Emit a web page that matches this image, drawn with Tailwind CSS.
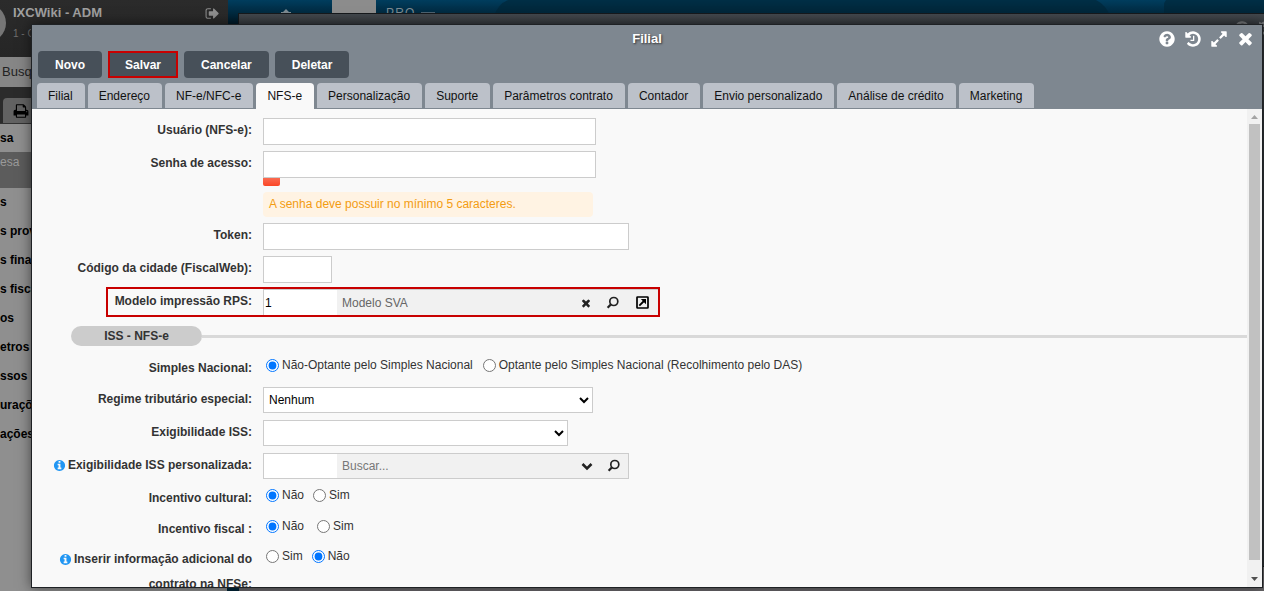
<!DOCTYPE html>
<html lang="pt-BR">
<head>
<meta charset="utf-8">
<title>Filial</title>
<script src="https://cdn.jsdelivr.net/npm/@tailwindcss/browser@4"></script>
</head>
<body class="relative h-screen overflow-hidden bg-[#6a686b] font-['Liberation_Sans',Arial,sans-serif] text-xs text-[#333]">
<svg class="hidden">
  <symbol id="search" viewBox="0 0 14 14"><circle cx="7.800" cy="5.500" r="4" fill="none" stroke="currentColor" stroke-width="1.700"/><path d="M4.800 8.500L1.600 11.800" stroke="currentColor" stroke-width="2.200" fill="none"/></symbol>
  <symbol id="info" viewBox="0 0 1792 1792"><path d="M1152 1376v-160q0-14-9-23t-23-9h-96v-512q0-14-9-23t-23-9h-320q-14 0-23 9t-9 23v160q0 14 9 23t23 9h96v320h-96q-14 0-23 9t-9 23v160q0 14 9 23t23 9h448q14 0 23-9t9-23zm-128-896v-160q0-14-9-23t-23-9h-192q-14 0-23 9t-9 23v160q0 14 9 23t23 9h192q14 0 23-9t9-23zm640 416q0 209-103 385.500t-279.500 279.500-385.500 103-385.500-103-279.500-279.500-103-385.500 103-385.500 279.500-279.500 385.500-103 385.500 103 279.500 279.500 103 385.500z" fill="currentColor"/></symbol>
  <symbol id="times" viewBox="0 0 1792 1792"><path d="M1490 1322q0 40-28 68l-136 136q-28 28-68 28t-68-28l-294-294-294 294q-28 28-68 28t-68-28l-136-136q-28-28-28-68t28-68l294-294-294-294q-28-28-28-68t28-68l136-136q28-28 68-28t68 28l294 294 294-294q28-28 68-28t68 28l136 136q28 28 28 68t-28 68l-294 294 294 294q28 28 28 68z" fill="currentColor"/></symbol>
  <symbol id="question" viewBox="0 0 1792 1792"><path d="M1024 1376v-192q0-14-9-23t-23-9h-192q-14 0-23 9t-9 23v192q0 14 9 23t23 9h192q14 0 23-9t9-23zm256-672q0-88-55.500-163t-138.500-116-170-41q-243 0-371 213-15 24 8 42l132 100q7 6 19 6 16 0 25-12 53-68 86-92 34-24 86-24 48 0 85.500 26t37.500 59q0 38-20 61t-68 45q-63 28-115.500 86.500t-52.500 125.500v36q0 14 9 23t23 9h192q14 0 23-9t9-23q0-19 21.500-49.500t54.500-49.500q32-18 49-28.500t46-35 44.500-48 28-60.500 12.500-81zm384 192q0 209-103 385.500t-279.500 279.500-385.500 103-385.500-103-279.500-279.500-103-385.500 103-385.500 279.500-279.500 385.500-103 385.500 103 279.500 279.500 103 385.500z" fill="currentColor"/></symbol>
  <symbol id="history" viewBox="0 0 1792 1792"><path d="M1664 896q0 156-61 298t-164 245-245 164-298 61q-172 0-327-72.500t-264-204.500q-7-10-6.500-22.500t8.500-20.500l137-138q10-9 25-9 16 2 23 12 73 95 179 147t225 52q104 0 198.500-40.500t163.500-109.500 109.500-163.500 40.500-198.500-40.500-198.500-109.500-163.500-163.500-109.500-198.500-40.500q-98 0-188 35.500t-160 101.500l137 138q31 30 14 69-17 40-59 40h-448q-26 0-45-19t-19-45v-448q0-42 40-59 39-17 69 14l130 129q107-101 244.500-156.500t284.500-55.500q156 0 298 61t245 164 164 245 61 298zm-640-288v448q0 14-9 23t-23 9h-320q-14 0-23-9t-9-23v-64q0-14 9-23t23-9h224v-352q0-14 9-23t23-9h64q14 0 23 9t9 23z" fill="currentColor"/></symbol>
  <symbol id="expand" viewBox="0 0 1792 1792"><path d="M883 1056q0 13-10 23l-332 332 144 144q19 19 19 45t-19 45-45 19h-448q-26 0-45-19t-19-45v-448q0-26 19-45t45-19 45 19l144 144 332-332q10-10 23-10t23 10l114 114q10 10 10 23zm781-864v448q0 26-19 45t-45 19-45-19l-144-144-332 332q-10 10-23 10t-23-10l-114-114q-10-10-10-23t10-23l332-332-144-144q-19-19-19-45t19-45 45-19h448q26 0 45 19t19 45z" fill="currentColor"/></symbol>
</svg>

<!-- Top banner -->
<div class="absolute inset-x-0 top-0 h-6 overflow-hidden bg-linear-to-b from-[#003d5e] to-[#001a28]">
  <svg class="absolute left-[228px] top-0 h-4 w-[1036px]" viewBox="0 0 1036 16">
    <path d="M266 16Q270 4 280 0H868Q878 5 882 16Z" fill="#002536" fill-opacity=".6"/>
    <path d="M936 16V6Q936 2 938 0H1036V16Z" fill="#002536" fill-opacity=".6"/>
    <path d="M53 13V12H55L58 9L61 12H63V13Z" fill="#7d8a91"/>
    <path d="M193 12H207V13H193Z" fill="#4d6270"/>
  </svg>
  <div class="absolute left-[332px] top-0 h-4 w-11 bg-[#8c8c8c]"></div>
  <div class="absolute left-[386px] top-[7px] text-xs leading-3 tracking-widest text-[#7d8a91]">PRO</div>
</div>

<!-- Side menu behind the window -->
<aside class="absolute bottom-0 left-0 top-0 flex w-[228px] flex-col bg-[#6a686b]">
  <div class="relative flex h-[57px] shrink-0 overflow-hidden bg-linear-to-b from-[#2b2b2b] to-[#262626] pl-[13px] pr-2">
    <div class="absolute -left-8 top-1 size-[38px] rounded-full bg-[#767676]"></div>
    <div class="grow">
      <div class="mt-1 text-[13px] font-bold leading-[18px] text-[#a0a0a0]">IXCWiki - ADM</div>
      <div class="mt-[6px] text-[10px] leading-3 text-[#6e6e6e]">1 - Cli</div>
    </div>
    <svg class="mt-[6px] size-[15px] text-[#8f8f8f]" viewBox="0 0 1792 1792"><path fill="currentColor" d="M704 1440q0 4 1 20t.5 26.500-3 23.500-10 19.500-20.500 6.500h-320q-119 0-203.500-84.500t-84.500-203.500v-704q0-119 84.500-203.500t203.500-84.500h320q13 0 22.500 9.500t9.500 22.500q0 4 1 20t.5 26.500-3 23.500-10 19.500-20.500 6.500h-320q-66 0-113 47t-47 113v704q0 66 47 113t113 47h312l11.500 1 11.500 3 8 5.500 7 9 2 13.500zm928-544q0 26-19 45l-544 544q-19 19-45 19t-45-19-19-45v-288h-448q-26 0-45-19t-19-45v-384q0-26 19-45t45-19h448v-288q0-26 19-45t45-19 45 19l544 544q19 19 19 45z"/></svg>
  </div>
  <div class="h-[30px] shrink-0 bg-[#868686] pl-[2px] text-[13px] leading-[30px] text-[#222]">Busque</div>
  <div class="flex h-9 shrink-0 items-end bg-[#2b2b2b] pl-[3px]">
    <div class="flex h-[25px] w-12 items-center rounded-t bg-[#626262] pl-[10px]">
      <svg class="size-4 text-black" viewBox="0 0 1792 1792"><path fill="currentColor" d="M448 1536h896v-256h-896v256zm0-640h896v-384h-160q-40 0-68-28t-28-68v-160h-640v640zm1152 64q0-26-19-45t-45-19-45 19-19 45 19 45 45 19 45-19 19-45zm128 0v416q0 13-9.500 22.500t-22.500 9.500h-224v160q0 40-28 68t-68 28h-960q-40 0-68-28t-28-68v-160h-224q-13 0-22.500-9.500t-9.500-22.500v-416q0-79 56.500-135.500t135.500-56.500h64v-544q0-40 28-68t68-28h672q40 0 88 20t76 48l152 152q28 28 48 76t20 88v256h64q79 0 135.500 56.500t56.500 135.500z"/></svg>
    </div>
  </div>
  <nav class="grow whitespace-nowrap border-t border-[#333] bg-[#8f8f8f] font-bold leading-7 text-black">
    <div>sa</div>
    <div class="h-9 bg-[#5c5c5c] font-normal leading-5 text-[#9a9a9a]">esa</div>
    <div class="flex flex-col gap-px">
      <div>s</div><div>s provedor</div><div>s financeiro</div><div>s fiscais</div><div>os</div><div>etros</div><div>ssos</div><div>urações</div><div>ações</div>
    </div>
  </nav>
</aside>

<!-- Inner window, mostly covered -->
<div class="absolute -right-px bottom-6 left-[238px] top-[13px] border border-[#16191c] bg-linear-to-b from-[#43484d] to-[#2f3337] to-[16px]">
  <div class="flex justify-end gap-2 pr-0 pt-[6px] text-[#74777a]">
    <svg class="size-4"><use href="#question"/></svg>
    <svg class="-mr-[10px] size-4"><use href="#history"/></svg>
  </div>
</div>

<!-- Filial window -->
<main class="absolute bottom-[3px] left-[31px] right-px top-6 flex flex-col overflow-hidden border border-[#1e2124] bg-[#f9f9f9] shadow-[0_0_12px_#0008]">
  <header class="shrink-0 bg-[#7e8790]">
    <div class="relative">
      <h1 class="h-[26px] text-center text-[13px] font-bold leading-7 text-white [text-shadow:1px_1px_2px_#333]">Filial</h1>
      <div class="absolute right-[7px] top-1 flex items-center gap-2 text-white">
        <button aria-label="Ajuda"><svg class="size-[18px]"><use href="#question"/></svg></button>
        <button aria-label="Histórico"><svg class="size-[18px]"><use href="#history"/></svg></button>
        <button aria-label="Expandir"><svg class="size-[18px]"><use href="#expand"/></svg></button>
        <button aria-label="Fechar"><svg class="size-[19px]"><use href="#times"/></svg></button>
      </div>
    </div>
    <div class="flex h-[27px] gap-[6px] px-[6px] font-bold text-white">
      <button class="rounded-sm bg-[#475059] px-[17px]">Novo</button>
      <button class="border-2 border-[#c80000] bg-[#475059] px-[15px]">Salvar</button>
      <button class="rounded-sm bg-[#475059] px-[17px]">Cancelar</button>
      <button class="rounded-sm bg-[#475059] px-[17px]">Deletar</button>
    </div>
    <div class="mt-[5px] flex h-[26px] gap-[3px] pl-[5px] text-[#111] *:h-[25px] *:rounded-t *:bg-[#bcc1c9] *:pl-[11px] *:pr-3" role="tablist">
      <button role="tab">Filial</button>
      <button role="tab">Endereço</button>
      <button role="tab">NF-e/NFC-e</button>
      <button role="tab" aria-selected="true" class="h-[26px]! bg-[#f9f9f9]!">NFS-e</button>
      <button role="tab">Personalização</button>
      <button role="tab">Suporte</button>
      <button role="tab">Parâmetros contrato</button>
      <button role="tab">Contador</button>
      <button role="tab">Envio personalizado</button>
      <button role="tab">Análise de crédito</button>
      <button role="tab">Marketing</button>
    </div>
  </header>

  <div class="flex min-h-0 grow">
    <form class="flex min-w-0 grow flex-col gap-[6px] overflow-hidden pt-[9px]">
      <div class="flex h-[27px] shrink-0 gap-[11px]">
        <label for="usuario" class="w-[220px] text-right font-bold leading-[25px]">Usuário (NFS-e):</label>
        <input id="usuario" class="w-[333px] border border-[#ccc] bg-white px-1">
      </div>
      <div class="flex shrink-0 gap-[11px]">
        <label for="senha" class="w-[220px] text-right font-bold leading-[25px]">Senha de acesso:</label>
        <div>
          <input id="senha" type="password" class="block h-[27px] w-[333px] border border-[#ccc] bg-white px-1">
          <div class="h-2 w-[17px] rounded-b-xs bg-linear-to-b from-[#fa6a50] to-[#fb4524]"></div>
          <p class="mt-[6px] w-[330px] rounded bg-[#fff3e3] pl-[6px] leading-[25px] text-[#f39c12]">A senha deve possuir no mínimo 5 caracteres.</p>
        </div>
      </div>
      <div class="flex h-[27px] shrink-0 gap-[11px]">
        <label for="token" class="w-[220px] text-right font-bold leading-[25px]">Token:</label>
        <input id="token" class="w-[366px] border border-[#ccc] bg-white px-1">
      </div>
      <div class="flex h-[27px] shrink-0 gap-[11px]">
        <label for="cidade" class="w-[220px] text-right font-bold leading-[25px]">Código da cidade (FiscalWeb):</label>
        <input id="cidade" class="w-[69px] border border-[#ccc] bg-white px-1">
      </div>
      <div class="relative flex h-[27px] shrink-0 gap-[11px]">
        <label for="modelo" class="w-[220px] text-right font-bold leading-[25px]">Modelo impressão RPS:</label>
        <div class="flex w-[395px] border-l border-t border-[#ccc] bg-[#f1f1f1]">
          <input id="modelo" value="1" class="w-[73px] bg-white pl-px text-xs text-black">
          <span class="grow pl-[5px] leading-[26px] text-[#666]">Modelo SVA</span>
          <div class="flex items-center gap-[14px] pb-px pr-[9px] text-[#222]">
            <button type="button" aria-label="Limpar"><svg class="size-3"><use href="#times"/></svg></button>
            <button type="button" aria-label="Pesquisar"><svg class="size-[14px]"><use href="#search"/></svg></button>
            <button type="button" aria-label="Abrir"><svg class="ml-[2px] size-[13px] text-black" viewBox="0 0 13 13"><rect x="1" y="1" width="11" height="11" rx=".5" fill="none" stroke="currentColor" stroke-width="1.700"/><path d="M3.300 9.700L8 5" stroke="currentColor" stroke-width="1.800"/><path d="M4.800 3H10V8.200Z" fill="currentColor"/></svg></button>
          </div>
        </div>
        <div class="pointer-events-none absolute -top-[2px] bottom-[-1px] left-[74px] w-[554px] border-2 border-[#c80000]"></div>
      </div>
      <div class="my-1 flex h-5 shrink-0 items-center pl-[39px]">
        <h2 class="w-[131px] rounded-full bg-[#ccc] text-center font-bold leading-5">ISS - NFS-e</h2>
        <div class="h-[3px] grow bg-[#d9d9d9]"></div>
      </div>
      <div class="flex h-[25px] shrink-0 gap-[14px]">
        <div id="l-simples" class="w-[220px] text-right font-bold leading-[25px]">Simples Nacional:</div>
        <div role="radiogroup" aria-labelledby="l-simples" class="flex h-[18px] gap-[10px]">
          <label class="flex items-center gap-[3px]"><input type="radio" name="simples" checked class="size-[13px]">Não-Optante pelo Simples Nacional</label>
          <label class="flex items-center gap-[3px]"><input type="radio" name="simples" class="size-[13px]">Optante pelo Simples Nacional (Recolhimento pelo DAS)</label>
        </div>
      </div>
      <div class="flex h-[27px] shrink-0 gap-[11px]">
        <label for="regime" class="w-[220px] text-right font-bold leading-[25px]">Regime tributário especial:</label>
        <select id="regime" class="h-[26px] w-[330px] border border-[#ccc] bg-white pl-[1px] text-black"><option>Nenhum</option></select>
      </div>
      <div class="flex h-[27px] shrink-0 gap-[11px]">
        <label for="exig" class="w-[220px] text-right font-bold leading-[25px]">Exigibilidade ISS:</label>
        <select id="exig" class="h-[26px] w-[305px] border border-[#ccc] bg-white text-black"><option></option></select>
      </div>
      <div class="flex h-[27px] shrink-0 gap-[11px]">
        <label for="exigp" class="flex h-[25px] w-[220px] items-center justify-end gap-[2px] font-bold leading-[25px]"><svg class="size-[13px] text-[#2196f3]"><use href="#info"/></svg>Exigibilidade ISS personalizada:</label>
        <div class="flex h-[26px] w-[366px] border border-[#ccc] bg-[#f1f1f1]">
          <input id="exigp" class="w-[73px] bg-white px-1">
          <input aria-label="Buscar" placeholder="Buscar..." class="min-w-0 grow pl-[5px] placeholder:text-[#777]">
          <div class="flex items-center gap-[14px] pr-[7px] text-[#222]">
            <button type="button" aria-label="Abrir lista"><svg class="size-3" viewBox="0 0 12 12"><path d="M1.500 4L6 8.500L10.500 4" fill="none" stroke="currentColor" stroke-width="2.600"/></svg></button>
            <button type="button" aria-label="Pesquisar"><svg class="size-[14px]"><use href="#search"/></svg></button>
          </div>
        </div>
      </div>
      <div class="flex h-[25px] shrink-0 gap-[14px]">
        <div id="l-cult" class="w-[220px] text-right font-bold leading-[25px]">Incentivo cultural:</div>
        <div role="radiogroup" aria-labelledby="l-cult" class="flex h-[18px] gap-[9px]">
          <label class="flex items-center gap-[3px]"><input type="radio" name="cult" checked class="size-[13px]">Não</label>
          <label class="flex items-center gap-[3px]"><input type="radio" name="cult" class="size-[13px]">Sim</label>
        </div>
      </div>
      <div class="flex h-6 shrink-0 gap-[14px]">
        <div id="l-fisc" class="w-[220px] text-right font-bold leading-[25px]">Incentivo fiscal :</div>
        <div role="radiogroup" aria-labelledby="l-fisc" class="flex h-[18px] gap-[13px]">
          <label class="flex items-center gap-[3px]"><input type="radio" name="fisc" checked class="size-[13px]">Não</label>
          <label class="flex items-center gap-[3px]"><input type="radio" name="fisc" class="size-[13px]">Sim</label>
        </div>
      </div>
      <div class="flex shrink-0 gap-[14px]">
        <div id="l-info" class="w-[220px] pl-6 text-right font-bold leading-[25px]"><svg class="mr-[2px] inline size-[13px] text-[#2196f3]"><use href="#info"/></svg>Inserir informação adicional do contrato na NFSe:</div>
        <div role="radiogroup" aria-labelledby="l-info" class="flex h-[18px] gap-[9px]">
          <label class="flex items-center gap-[3px]"><input type="radio" name="info" class="size-[13px]">Sim</label>
          <label class="flex items-center gap-[3px]"><input type="radio" name="info" checked class="size-[13px]">Não</label>
        </div>
      </div>
    </form>
    <!-- Scrollbar -->
    <div class="flex w-[15px] shrink-0 flex-col items-center bg-[#f1f1f1] pb-[6px] pt-[6px]">
      <svg class="h-1 w-[7px] text-[#a3a3a3]" viewBox="0 0 7 4"><path d="M0 4L3.500 0L7 4Z" fill="currentColor"/></svg>
      <div class="mb-[17px] mt-[5px] w-[11px] grow bg-[#c1c1c1]"></div>
      <svg class="h-1 w-[7px] text-[#505050]" viewBox="0 0 7 4"><path d="M0 0L3.500 4L7 0Z" fill="currentColor"/></svg>
    </div>
  </div>
</main>
<div class="absolute bottom-0 left-[227px] h-[3px] w-3 bg-[#001d2c]"></div>
</body>
</html>
